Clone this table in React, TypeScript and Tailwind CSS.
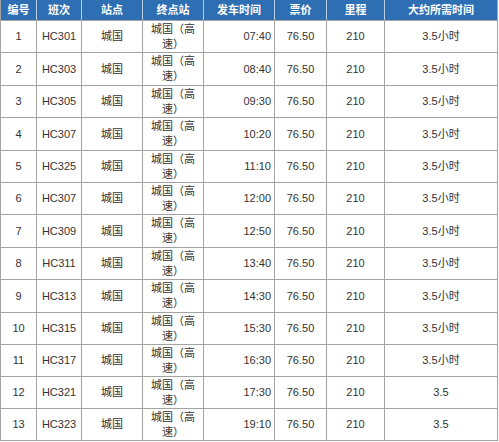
import React from "react";

const headers = ["编号", "班次", "站点", "终点站", "发车时间", "票价", "里程", "大约所需时间"];
const times = ["07:40", "08:40", "09:30", "10:20", "11:10", "12:00", "12:50", "13:40", "14:30", "15:30", "16:30", "17:30", "19:10"];
const codes = ["HC301", "HC303", "HC305", "HC307", "HC325", "HC307", "HC309", "HC311", "HC313", "HC315", "HC317", "HC321", "HC323"];
const heights = ["h-[32px]", "h-[33px]", "h-[32px]", "h-[33px]", "h-[32px]", "h-[32px]", "h-[33px]", "h-[32px]", "h-[33px]", "h-[32px]", "h-[32px]", "h-[32px]", "h-[32px]"];
const cols = "grid grid-cols-[36px_45px_61px_61px_71px_52px_58px_113px]";

export default function App() {
  return (
    <div className="w-[499px] h-[442px] bg-white" style={{ fontFamily: '"Liberation Sans", "Noto Sans CJK SC", sans-serif' }}>
      <div className="w-[498px] border-l border-[#a3a3a3]">
        <div className={`${cols} h-[21px] bg-[#2e6eb2] border-b border-[#a3a3a3]`}>
          {headers.map((h, i) => (
            <div key={i} className={`flex items-center justify-center text-[11px] font-bold text-white leading-none ${i < 7 ? "border-r border-[#b9cde3]" : "border-r border-[#a3a3a3]"}`}>
              {h}
            </div>
          ))}
        </div>
        {codes.map((c, r) => (
          <div key={r} className={`${cols} ${heights[r]} border-b border-[#a3a3a3] text-[11px] text-[#333]`}>
            <div className="flex items-center justify-center border-r border-[#a3a3a3]">{r + 1}</div>
            <div className="flex items-center justify-center border-r border-[#a3a3a3]">{c}</div>
            <div className="flex items-center justify-center border-r border-[#a3a3a3]">城国</div>
            <div className="flex flex-col items-center justify-center border-r border-[#a3a3a3] leading-[15px]">
              <span>城国（高</span>
              <span>速）</span>
            </div>
            <div className="flex items-center justify-end pr-[3px] border-r border-[#a3a3a3]">{times[r]}</div>
            <div className="flex items-center justify-center border-r border-[#a3a3a3]">76.50</div>
            <div className="flex items-center justify-center border-r border-[#a3a3a3]">210</div>
            <div className="flex items-center justify-center border-r border-[#a3a3a3]">{r < 11 ? "3.5小时" : "3.5"}</div>
          </div>
        ))}
      </div>
    </div>
  );
}
